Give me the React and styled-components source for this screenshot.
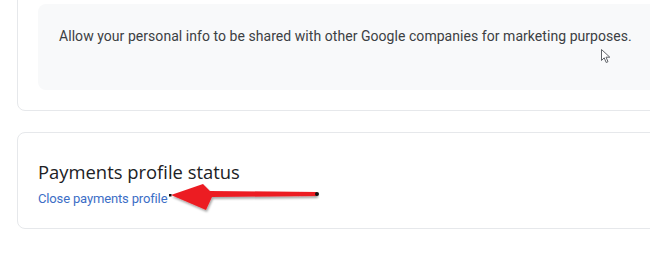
import React from 'react';
import styled, { createGlobalStyle } from 'styled-components';

const GlobalStyle = createGlobalStyle`
  html, body {
    margin: 0;
    padding: 0;
    background: #ffffff;
    overflow: hidden;
  }
  body {
    font-family: Roboto, "Noto Sans", Arial, sans-serif;
    color: #202124;
  }
`;

const Page = styled.div`
  display: flex;
  flex-direction: column;
  gap: 21px;
  padding-left: 17px;
  width: 700px;
`;

const Card = styled.section`
  position: relative;
  border: 1px solid #e6e8eb;
  border-radius: 8px;
  background: #ffffff;
  padding: ${(p) => p.$padding};
  margin-top: ${(p) => p.$offset || '0'};
`;

const InfoBox = styled.div`
  position: relative;
  background: #f8f9fa;
  border-radius: 8px;
  padding: 22px 21px 44px;
  font-size: 14px;
  line-height: 20px;
  color: #3c4043;
  letter-spacing: 0.05px;
`;

const Title = styled.h2`
  margin: 0;
  font-family: "Open Sans", Roboto, sans-serif;
  font-weight: 400;
  font-size: 18.4px;
  line-height: 28px;
  color: #202124;
`;

const Link = styled.a`
  display: inline-block;
  margin-top: 3px;
  font-size: 13px;
  line-height: 20px;
  letter-spacing: -0.15px;
  color: #3c6ec6;
  text-decoration: none;
  cursor: pointer;
`;

const Cursor = styled.svg`
  position: absolute;
  left: 563px;
  top: 45px;
`;

const Arrow = styled.svg`
  position: absolute;
  left: 148px;
  top: 47px;
  overflow: visible;
`;

export default function App() {
  return (
    <>
      <GlobalStyle />
      <Page>
        <Card $padding="24px 0 20px 20px" $offset="-21px">
          <InfoBox>
            Allow your personal info to be shared with other Google companies for marketing purposes.
            <Cursor width="11" height="15" viewBox="0 0 11 15">
              <path
                d="M0.5 0.5 L0.5 11.5 L3.2 8.8 L5.2 13.5 L7 12.7 L5 8.2 L8.8 8.2 Z"
                fill="#ffffff"
                stroke="#5f6368"
                strokeWidth="1"
                strokeLinejoin="round"
              />
            </Cursor>
          </InfoBox>
        </Card>
        <Card $padding="25px 20px 19px 20px">
          <Title>Payments profile status</Title>
          <Link>Close payments profile</Link>
          <Arrow width="155" height="34" viewBox="0 0 155 34">
            <defs>
              <filter id="shadow" x="-10%" y="-30%" width="120%" height="180%">
                <feDropShadow dx="1" dy="2" stdDeviation="1.2" floodColor="#000" floodOpacity="0.35" />
              </filter>
            </defs>
            <path
              d="M5 15 L37 4 L44 11 L151 12 L151 16 L46 17 L40 30 Z"
              fill="#ec1c24"
              filter="url(#shadow)"
            />
            <circle cx="151" cy="14" r="2" fill="#111" />
            <rect x="3" y="14" width="2.5" height="2.5" fill="#111" />
          </Arrow>
        </Card>
      </Page>
    </>
  );
}
